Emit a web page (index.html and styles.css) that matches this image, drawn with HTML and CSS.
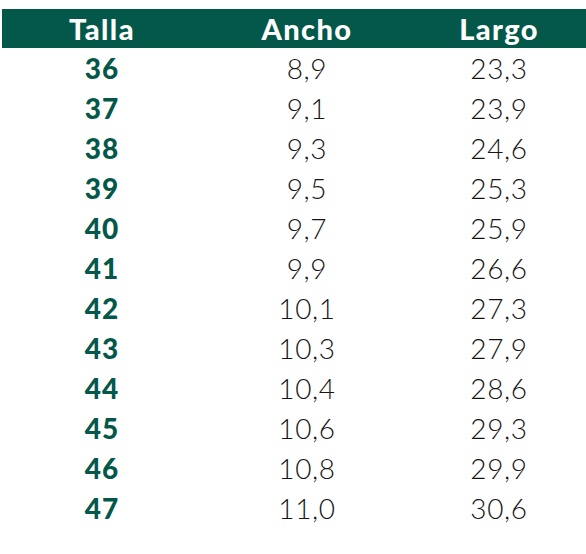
FILE: index.html
```html
<!DOCTYPE html>
<html lang="es">
<head>
<meta charset="utf-8">
<link rel="stylesheet" href="styles.css">
</head>
<body>
<div class="table">
  <div class="row head"><div>Talla</div><div>Ancho</div><div>Largo</div></div>
  <div class="row"><div class="size">36</div><div>8,9</div><div>23,3</div></div>
  <div class="row"><div class="size">37</div><div>9,1</div><div>23,9</div></div>
  <div class="row"><div class="size">38</div><div>9,3</div><div>24,6</div></div>
  <div class="row"><div class="size">39</div><div>9,5</div><div>25,3</div></div>
  <div class="row"><div class="size">40</div><div>9,7</div><div>25,9</div></div>
  <div class="row"><div class="size">41</div><div>9,9</div><div>26,6</div></div>
  <div class="row"><div class="size">42</div><div>10,1</div><div>27,3</div></div>
  <div class="row"><div class="size">43</div><div>10,3</div><div>27,9</div></div>
  <div class="row"><div class="size">44</div><div>10,4</div><div>28,6</div></div>
  <div class="row"><div class="size">45</div><div>10,6</div><div>29,3</div></div>
  <div class="row"><div class="size">46</div><div>10,8</div><div>29,9</div></div>
  <div class="row"><div class="size">47</div><div>11,0</div><div>30,6</div></div>
</div>
</body>
</html>
```
FILE: styles.css
```css
html, body {
  margin: 0;
  padding: 0;
  background: #ffffff;
}
body {
  font-family: Lato, "Noto Sans", sans-serif;
  color: #161616;
}
.table {
  margin: 9px 0 0 2px;
  display: flex;
  flex-direction: column;
}
.row {
  display: grid;
  grid-template-columns: 200px 210px 1fr;
  height: 40px;
  align-items: center;
  text-align: center;
  font-size: 28px;
  font-weight: 300;
  line-height: 1;
  letter-spacing: 0.6px;
}
.row.head {
  height: 39px;
  background: #03584a;
  color: #ffffff;
  font-weight: 900;
  font-size: 29px;
  letter-spacing: 1.4px;
}
.size {
  color: #03584a;
  font-weight: 900;
  letter-spacing: 1px;
}
```
